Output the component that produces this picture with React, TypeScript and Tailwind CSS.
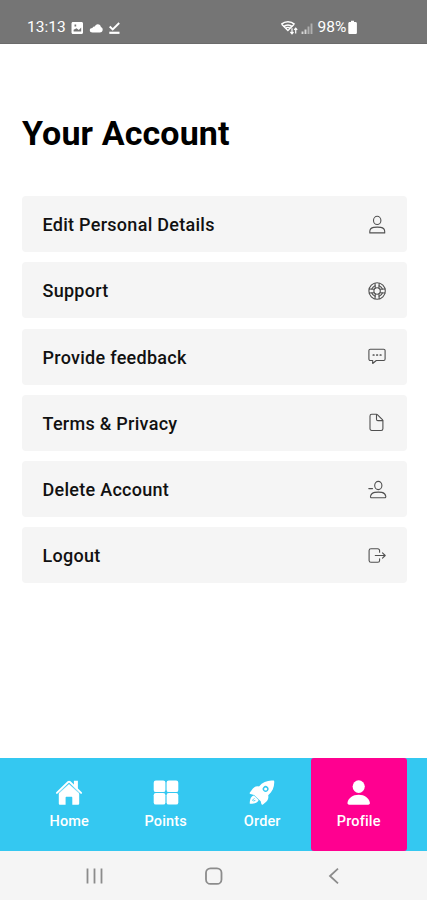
import React from "react";

interface MenuItem {
  label: string;
  icon: React.ReactNode;
}

interface TabItem {
  label: string;
  icon: React.ReactNode;
  active?: boolean;
}

interface LineIconProps {
  children: React.ReactNode;
}

// Thin outline icon used in the menu rows
const LineIcon: React.FC<LineIconProps> = ({ children }) => (
  <svg
    width="20"
    height="20"
    viewBox="0 0 20 20"
    fill="none"
    stroke="#505050"
    strokeWidth="1.1"
    strokeLinecap="round"
    strokeLinejoin="round"
  >
    {children}
  </svg>
);

const menuItems: MenuItem[] = [
  {
    label: "Edit Personal Details",
    icon: (
      <LineIcon>
        <ellipse cx="10.2" cy="5.4" rx="3.7" ry="4.1" />
        <path d="M2.8 17.9v-1.3c0-2.2 1.6-3.9 3.900-4.200 2.300-.3 4.800-.3 7.100 0 2.300.3 3.900 2 3.900 4.200v1.300z" />
      </LineIcon>
    ),
  },
  {
    label: "Support",
    icon: (
      <LineIcon>
        <circle cx="10.1" cy="10" r="8.2" />
        <circle cx="10.1" cy="10" r="3.2" />
        <path d="M8 2.2L8.3 7.2M12.2 2.2L11.9 7.2M8 17.8l.3-5M12.2 17.8l-.3-5M2.2 8l5 .3M2.2 12l5-.3M18 8l-5 .3M18 12l-5-.3" />
        <path d="M4.800 8a6 6 0 0 1 3.300-3.300M12.100 4.700A6 6 0 0 1 15.400 8M15.400 12a6 6 0 0 1-3.300 3.300M8.100 15.300A6 6 0 0 1 4.800 12" />
      </LineIcon>
    ),
  },
  {
    label: "Provide feedback",
    icon: (
      <LineIcon>
        <path d="M3.3 2.2h13.4c.8 0 1.4.6 1.4 1.4v8.500c0 .8-.6 1.400-1.400 1.400H9.300l-3.600 3v-3H3.300c-.8 0-1.400-.6-1.400-1.400V3.600c0-.8.6-1.400 1.400-1.400z" />
        <path d="M6.3 8h.6M9.8 8h.6M13.300 8h.6" strokeWidth="1.7" />
      </LineIcon>
    ),
  },
  {
    label: "Terms & Privacy",
    icon: (
      <LineIcon>
        <path d="M4.7 1.300h4.700c.5 0 .9.200 1.200.5l4.800 4.800c.3.300.5.700.5 1.200v8c0 1-.8 1.700-1.700 1.700H4.700c-1 0-1.700-.8-1.700-1.700V3c0-1 .8-1.700 1.700-1.700z" />
        <path d="M9.500 1.500v4.700c0 .8.600 1.400 1.400 1.400h4.800" />
      </LineIcon>
    ),
  },
  {
    label: "Delete Account",
    icon: (
      <LineIcon>
        <ellipse cx="11.3" cy="5.500" rx="3.600" ry="4.100" />
        <path d="M1.800 8.600h3.700" />
        <path d="M4.600 17.700c-.9 0-1.300-.5-1.100-1.300.5-2.500 2-3.600 4.200-4 2.400-.4 4.900-.4 7.200 0 2.200.4 3.500 1.700 3.900 4 .1.800-.3 1.300-1.100 1.300z" />
      </LineIcon>
    ),
  },
  {
    label: "Logout",
    icon: (
      <LineIcon>
        <path d="M12.600 6.200V4.600c0-1-.8-1.800-1.800-1.800H4c-1 0-1.900.8-1.900 1.800v9.900c0 1 .9 1.800 1.900 1.800h6.800c1 0 1.800-.8 1.800-1.800v-1.600" />
        <path d="M8.300 9.500h9.700M15.500 6.900l2.700 2.600-2.700 2.600" />
      </LineIcon>
    ),
  },
];

const tabs: TabItem[] = [
  {
    label: "Home",
    icon: (
      <svg width="28" height="28" viewBox="0 0 28 28" fill="#fff">
        <path d="M14 4.800L3.800 13.800v10.600c0 .8.600 1.300 1.300 1.300h5.500v-7c0-.6.400-1 1-1h4.700c.6 0 1 .4 1 1v7h5.600c.7 0 1.300-.5 1.300-1.300V13.800z" />
        <path
          d="M1.900 13.900L13.200 3c.5-.4 1.200-.4 1.700 0l11.200 10.900"
          fill="none"
          stroke="#fff"
          strokeWidth="1.900"
          strokeLinecap="round"
        />
        <path d="M18.900 1.800h4v9.400l-4-3.800z" />
        <path d="M3.200 14.800L14 4.800l10.800 10" fill="none" stroke="#34c8f1" strokeWidth=".45" />
      </svg>
    ),
  },
  {
    label: "Points",
    icon: (
      <svg width="28" height="28" viewBox="0 0 28 28" fill="#fff">
        <rect x="1.7" y="1.600" width="11.700" height="11.500" rx="2.200" />
        <rect x="14.600" y="1.600" width="11.700" height="11.500" rx="2.200" />
        <rect x="1.700" y="14.100" width="11.700" height="11.500" rx="2.200" />
        <rect x="14.600" y="14.100" width="11.700" height="11.500" rx="2.200" />
      </svg>
    ),
  },
  {
    label: "Order",
    icon: (
      <svg width="28" height="28" viewBox="0 0 28 28" fill="#fff">
        <path
          fillRule="evenodd"
          d="M25.600 1.600c-5.600-.6-10.900 1.400-14.600 5.800-2.600-.5-4.500.3-6.100 2.200L1.900 13.500c-.5.700-.2 1.400.6 1.600l3.600.8 6.600 6.400.7 2.800c.2.800 1 1 1.600.5l3.200-2.800c1.900-1.800 2.500-4 2-6.500 4.400-3.600 6.400-8.700 6-14.100 0-.4-.2-.6-.6-.6zM19.700 11.900a2.900 2.900 0 1 1-4.200-4 2.900 2.900 0 0 1 4.200 4z"
        />
        <circle cx="17.600" cy="9.900" r="1.500" />
        <path d="M5.900 16.400C3.200 17 2 19.600 1.700 23.900c0 .6.300.9.800.9 4.300-.3 7.300-1.300 8.100-3.900z" />
        <path d="M4.700 21.900c.2-1.300.7-2.100 1.700-2.400M7.400 21.300l-1.900.8" fill="none" stroke="#34c8f1" strokeWidth=".9" />
      </svg>
    ),
  },
  {
    label: "Profile",
    active: true,
    icon: (
      <svg width="28" height="28" viewBox="0 0 28 28" fill="#fff">
        <ellipse cx="13.700" cy="7.600" rx="6.100" ry="6.300" />
        <path d="M4.200 25.700c-1.200 0-1.900-.8-1.700-1.900.8-4.900 5.300-8.100 11.200-8.100s10.400 3.200 11.200 8.100c.2 1.100-.5 1.900-1.700 1.900z" />
      </svg>
    ),
  },
];

const StatusBar: React.FC = () => (
  <header className="flex h-11 items-center justify-between border-b border-[#6b6b6b] bg-[#757575] pt-3 pr-[69px] pl-[27px] text-[15.5px] text-white">
    <div className="flex items-center">
      <span className="w-[44px]">13:13</span>
      <svg width="50" height="14" viewBox="0 0 50 14" fill="#fff">
        <path
          fillRule="evenodd"
          d="M2 1h8.500c.9 0 1.500.6 1.500 1.500v9c0 .9-.6 1.500-1.500 1.500H2c-.9 0-1.500-.6-1.500-1.500v-9C.5 1.600 1.100 1 2 1zm.6 9.500h7.600V6.600L7.800 9 5.500 7.300l-2.900 1.500zM3.500 3.600v1.800h1.700V3.600z"
        />
        <path d="M21.500 11.600c-1.700 0-2.700-1-2.700-2.300 0-1.500 1-2.300 2.600-2.300.5-.9 1.300-1.400 2.400-1.400.4-1.500 1.500-2.400 3-2.400 1.700 0 3 1.100 3.100 2.800 1.200.4 1.800 1.400 1.800 2.600 0 1.800-1.100 3-2.900 3z" />
        <path d="M38.700 5.500l3 3 6.500-6.500" fill="none" stroke="#fff" strokeWidth="1.900" />
        <path d="M38.300 10.700h10.200v2.200H38.300z" />
      </svg>
    </div>
    <div className="flex items-center">
      <svg width="37" height="16" viewBox="0 0 37 16" fill="none" stroke="#fff">
        <path d="M.3 4.300C4.200.9 9.700.9 13.600 4.300M2.600 6.700c2.600-2.200 6.200-2.200 8.700 0" strokeWidth="1.700" />
        <path d="M.9 4.500l6 6 6-6M4.700 8.200c1.400-1.100 3-1.100 4.400 0" strokeWidth="1.300" />
        <path d="M11 8.300v5.400M9.400 12l1.600 1.800 1.500-1.800M14.700 8v5.400M13.200 9.900l1.500-1.800 1.500 1.800" strokeWidth="1.200" />
        <path d="M21.500 11.500V14M24.500 9.500V14" stroke="#d5d5d5" strokeWidth="1.900" />
        <path d="M27.500 6.500V14M30.500 3.500V14" stroke="#b0b0b0" strokeWidth="1.900" />
      </svg>
      <span className="w-[29.5px]">98%</span>
      <svg width="11" height="15" viewBox="0 0 11 15" fill="#fff">
        <path d="M4 .7h3v1.400h1.500c.8 0 1.400.6 1.400 1.400v9.200c0 .8-.6 1.400-1.400 1.400H2.700c-.8 0-1.400-.6-1.400-1.400V3.500c0-.8.600-1.400 1.400-1.400H4z" />
      </svg>
    </div>
  </header>
);

const TabBar: React.FC = () => (
  <nav className="flex h-[93px] bg-[#34c8f1] pr-5 pl-[21px]">
    {tabs.map((tab) => (
      <button
        key={tab.label}
        className={`flex flex-1 flex-col items-center rounded-[3px] pt-[21px] text-[14.5px] leading-5 font-medium tracking-[0.15px] text-white ${
          tab.active ? "bg-[#ff0090]" : ""
        }`}
      >
        {tab.icon}
        <span className="mt-[5px]">{tab.label}</span>
      </button>
    ))}
  </nav>
);

const SystemBar: React.FC = () => (
  <footer className="flex h-[49px] items-center justify-between bg-[#f5f5f5] pr-[82px] pl-[83px]">
    <svg width="24" height="24" viewBox="0 0 24 24" fill="none" stroke="#8c8c8c" strokeWidth="1.8">
      <path d="M4.500 4.500v15M11.500 4.500v15M18.500 4.500v15" />
    </svg>
    <svg width="24" height="24" viewBox="0 0 24 24" fill="none" stroke="#8c8c8c" strokeWidth="1.8">
      <rect x="4" y="4.300" width="15.500" height="15.600" rx="4.500" />
    </svg>
    <svg width="24" height="24" viewBox="0 0 24 24" fill="none" stroke="#8c8c8c" strokeWidth="1.8">
      <path d="M17 4.700L9 12l8 7.300" />
    </svg>
  </footer>
);

const App: React.FC = () => {
  return (
    <div className="flex h-[900px] w-[427px] flex-col bg-white font-['Roboto',sans-serif]">
      <StatusBar />
      <main className="flex-1 pt-[69px] pr-5 pl-[22px]">
        <h1 className="text-[34px] leading-10 font-bold tracking-[0.12px] text-black">
          Your Account
        </h1>
        <ul className="mt-[43px] flex flex-col gap-[10.3px]">
          {menuItems.map((item) => (
            <li
              key={item.label}
              className="flex h-14 items-center justify-between rounded bg-[#f5f5f5] pt-px pr-5 pl-[20.5px]"
            >
              <span className="text-[18px] font-medium tracking-[0.28px] text-[#111]">
                {item.label}
              </span>
              {item.icon}
            </li>
          ))}
        </ul>
      </main>
      <TabBar />
      <SystemBar />
    </div>
  );
};

export default App;
